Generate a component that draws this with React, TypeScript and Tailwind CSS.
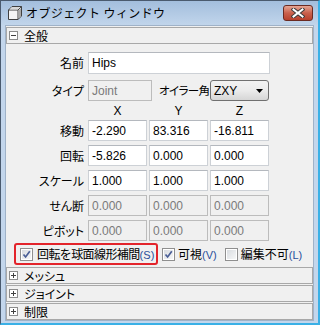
import React from "react";

const JP = "font-['Noto_Sans_CJK_JP',sans-serif]";
const LT = "font-['Liberation_Sans','Noto_Sans_CJK_JP',sans-serif]";

function Field({ value, w, disabled }: { value: string; w: string; disabled?: boolean }) {
  return (
    <div
      className={`${w} h-[21px] shrink-0 flex items-center pl-[3px] border ${LT} text-[12px] ${
        disabled
          ? "bg-[#f0f0f0] border-[#bcbcbc] text-[#7a7a7a]"
          : "bg-white border-[#cdd1d6] border-t-[#b4b8be] text-black"
      }`}
    >
      {value}
    </div>
  );
}

function Check({ checked }: { checked: boolean }) {
  return (
    <div className="w-[13px] h-[13px] shrink-0 border border-[#8f8f8f] bg-white p-[1px]">
      <div className="w-full h-full bg-gradient-to-br from-[#d9dce0] to-[#f6f7f8] relative">
        {checked && (
          <svg viewBox="0 0 9 9" className="absolute inset-0 w-full h-full">
            <path d="M1.5 4.5 L3.6 7 L7.8 1.3" fill="none" stroke="#4a5e96" strokeWidth="1.7" />
          </svg>
        )}
      </div>
    </div>
  );
}

function Section({ label, open }: { label: string; open?: boolean }) {
  return (
    <div className="h-[17px] border border-[#a8a8a8] bg-[#f0f0f0] flex items-center pl-[2px]">
      <div className="w-[9px] h-[9px] border border-[#8c8c8c] bg-white relative shrink-0">
        <div className="absolute left-[1px] right-[1px] top-[3px] h-[1px] bg-[#404040]" />
        {!open && <div className="absolute top-[1px] bottom-[1px] left-[3px] w-[1px] bg-[#404040]" />}
      </div>
      <span className={`${JP} text-[12px] leading-none ml-[6px] text-black [font-feature-settings:'palt']`}>{label}</span>
    </div>
  );
}

function Label({ children }: { children: React.ReactNode }) {
  return (
    <div className={`w-[82px] shrink-0 pr-[4px] text-right ${JP} text-[12px] text-black [font-feature-settings:'palt']`}>
      {children}
    </div>
  );
}

function Mn({ c }: { c: string }) {
  return <span className="font-['Liberation_Sans',sans-serif] text-[11px] tracking-normal text-[#2a4f9c]">({c})</span>;
}

export default function App() {
  const rows: { label: string; vals: string[]; disabled?: boolean }[] = [
    { label: "移動", vals: ["-2.290", "83.316", "-16.811"] },
    { label: "回転", vals: ["-5.826", "0.000", "0.000"] },
    { label: "スケール", vals: ["1.000", "1.000", "1.000"] },
    { label: "せん断", vals: ["0.000", "0.000", "0.000"], disabled: true },
    { label: "ピボット", vals: ["0.000", "0.000", "0.000"], disabled: true },
  ];
  return (
    <div className="w-[320px] h-[325px] bg-[#c3d6ec] border-l border-t border-[#4a5a6e] border-r-2 border-b-2 border-r-[#3ab0e6] border-b-[#3ab0e6] flex flex-col overflow-hidden">
      {/* Title bar */}
      <div className="h-[24px] shrink-0 flex items-center bg-gradient-to-b from-[#a3bedd] to-[#c1d5eb] pl-[6px] pr-[5px]">
        <svg viewBox="0 0 16 16" className="w-[16px] h-[16px] shrink-0">
          <path d="M1.5 5 L5 1.5 L14.5 1.5 L14.5 11 L11 14.5 L1.5 14.5 Z" fill="#f4f4f4" stroke="#404040" strokeWidth="1" />
          <path d="M1.5 5 L11 5 L14.5 1.5 M11 5 L11 14.5" fill="none" stroke="#404040" strokeWidth="1" />
          <path d="M11.5 5.5 L14 3 L14 10.8 L11.5 13.3 Z" fill="#a8a8a8" />
          <path d="M2.5 4.5 L5.2 2 L13.5 2 L10.8 4.5 Z" fill="#d8d8d8" />
        </svg>
        <span className={`${JP} text-[12px] ml-[3px] text-black leading-none tracking-[0.4px]`}>オブジェクト ウィンドウ</span>
        <div className="ml-auto w-[30px] h-[16px] rounded-[3px] border border-[#6a2a22] bg-gradient-to-b from-[#e5a594] via-[#c9604c] to-[#b8402c] flex items-center justify-center">
          <svg viewBox="0 0 14 10" className="w-[14px] h-[10px]">
            <path d="M2.5 1.5 L11.5 8.5 M11.5 1.5 L2.5 8.5" stroke="#3a3a3a" strokeWidth="4" strokeLinecap="square" />
            <path d="M2.5 1.5 L11.5 8.5 M11.5 1.5 L2.5 8.5" stroke="#ffffff" strokeWidth="2" strokeLinecap="square" />
          </svg>
        </div>
      </div>
      {/* Body */}
      <div className="flex-1 flex px-[4px] pb-[3px]">
        <div className="flex-1 border border-[#9fb2c8] bg-[#f0f0f0] flex flex-col pt-[1px]">
          <Section label="全般" open />
          <div className="flex flex-col">
            {/* name */}
            <div className="flex items-center mt-[8px]">
              <Label>名前</Label>
              <div className="w-[182px] h-[22px] flex items-center pl-[3px] border bg-white border-[#cdd1d6] border-t-[#b4b8be] font-['Liberation_Sans',sans-serif] text-[12px] text-black">
                Hips
              </div>
            </div>
            {/* type */}
            <div className="flex items-center mt-[6px]">
              <Label>タイプ</Label>
              <Field value="Joint" w="w-[64px]" disabled />
              <div className={`ml-[7px] w-[51px] shrink-0 ${JP} text-[11.5px] text-black [font-feature-settings:'palt'] tracking-[-0.6px] whitespace-nowrap`}>オイラー角</div>
              <div className="w-[59px] h-[21px] rounded-[3px] border border-[#707070] bg-gradient-to-b from-[#f2f2f2] via-[#ebebeb] to-[#d6d6d6] flex items-center pl-[3px] pr-[5px]">
                <span className="font-['Liberation_Sans',sans-serif] text-[12px] text-black">ZXY</span>
                <svg viewBox="0 0 7 4" className="ml-auto w-[7px] h-[4px]">
                  <path d="M0 0 L7 0 L3.5 4 Z" fill="#000" />
                </svg>
              </div>
            </div>
            {/* XYZ header */}
            <div className="flex h-[18px] items-center mt-[1px]">
              <div className="w-[82px]" />
              <div className="flex gap-[2px] font-['Liberation_Sans',sans-serif] text-[12px] text-black">
                <div className="w-[59px] text-center">X</div>
                <div className="w-[59px] text-center">Y</div>
                <div className="w-[59px] text-center">Z</div>
              </div>
            </div>
            <div className="flex flex-col gap-[4px]">
              {rows.map((r) => (
                <div key={r.label} className="flex items-center">
                  <Label>{r.label}</Label>
                  <div className="flex gap-[2px]">
                    {r.vals.map((v, i) => (
                      <Field key={i} value={v} w="w-[59px]" disabled={r.disabled} />
                    ))}
                  </div>
                </div>
              ))}
            </div>
            {/* checkboxes */}
            <div className="flex items-center mt-[2px] pl-[8px]">
              <div className="h-[22px] w-[144px] shrink-0 border-2 border-[#e3242b] rounded-[3px] flex items-center pl-[4px]">
                <Check checked />
                <span className={`${JP} text-[12px] ml-[4px] text-black whitespace-nowrap tracking-[-0.6px]`}>
                  回転を球面線形補間<Mn c="S" />
                </span>
              </div>
              <div className="ml-[4px] flex items-center">
                <Check checked />
                <span className={`${JP} text-[12px] ml-[3px] text-black whitespace-nowrap`}>
                  可視<Mn c="V" />
                </span>
              </div>
              <div className="ml-[8px] flex items-center">
                <Check checked={false} />
                <span className={`${JP} text-[12px] ml-[3px] text-black whitespace-nowrap`}>
                  編集不可<Mn c="L" />
                </span>
              </div>
            </div>
          </div>
          <div className="flex flex-col gap-[1px] mt-[2px]">
            <Section label="メッシュ" />
            <Section label="ジョイント" />
            <Section label="制限" />
          </div>
        </div>
      </div>
    </div>
  );
}
